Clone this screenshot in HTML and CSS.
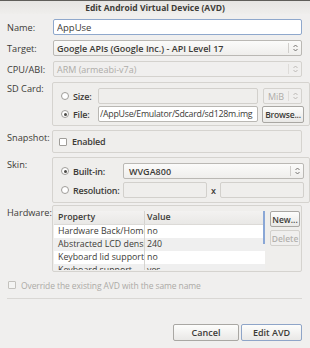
FILE: index.html
```html
<!DOCTYPE html>
<html lang="en">
<head>
    <meta charset="UTF-8">
    <title>Edit Android Virtual Device (AVD)</title>
    <link rel="stylesheet" href="styles.css">
</head>
<body>
    <div class="dialog">
        <!-- Title bar -->
        <div class="titlebar">Edit Android Virtual Device (AVD)</div>

        <div class="form">
            <div class="row row-name">
                <label class="lbl">Name:</label>
                <div class="field"><input class="text focus" type="text" value="AppUse"></div>
            </div>

            <div class="row row-target">
                <label class="lbl">Target:</label>
                <div class="field">
                    <div class="combo">
                        <span class="combo-text">Google APIs (Google Inc.) - API Level 17</span>
                        <span class="combo-arrow"><svg width="5" height="8" viewBox="0 0 5 8"><path d="M0.5 3 L2.5 1 L4.5 3 M0.5 5 L2.5 7 L4.5 5" fill="none" stroke="#6a6864" stroke-width="0.9"/></svg></span>
                    </div>
                </div>
            </div>

            <div class="row row-cpu">
                <label class="lbl">CPU/ABI:</label>
                <div class="field">
                    <div class="combo disabled">
                        <span class="combo-text">ARM (armeabi-v7a)</span>
                        <span class="combo-arrow"><svg width="5" height="8" viewBox="0 0 5 8"><path d="M0.5 3 L2.5 1 L4.5 3 M0.5 5 L2.5 7 L4.5 5" fill="none" stroke="#b5b3af" stroke-width="0.9"/></svg></span>
                    </div>
                </div>
            </div>

            <!-- SD card -->
            <div class="row row-group row-sd">
                <label class="lbl grp-lbl">SD Card:</label>
                <div class="group sd-group">
                    <div class="grp-line">
                        <span class="radio"></span>
                        <span class="opt sd-opt">Size:</span>
                        <input class="text disabled sd-input" type="text" value="">
                        <div class="combo disabled mib">
                            <span class="combo-text">MiB</span>
                            <span class="combo-arrow"><svg width="5" height="8" viewBox="0 0 5 8"><path d="M0.5 3 L2.5 1 L4.5 3 M0.5 5 L2.5 7 L4.5 5" fill="none" stroke="#b5b3af" stroke-width="0.9"/></svg></span>
                        </div>
                    </div>
                    <div class="grp-line">
                        <span class="radio checked"></span>
                        <span class="opt sd-opt">File:</span>
                        <input class="text sd-input path" type="text" value="/AppUse/Emulator/Sdcard/sd128m.img">
                        <button class="btn browse">Browse...</button>
                    </div>
                </div>
            </div>

            <!-- Snapshot -->
            <div class="row row-group row-snap">
                <label class="lbl grp-lbl">Snapshot:</label>
                <div class="group snap-group">
                    <span class="check"></span>
                    <span class="opt">Enabled</span>
                </div>
            </div>

            <!-- Skin -->
            <div class="row row-group row-skin">
                <label class="lbl grp-lbl">Skin:</label>
                <div class="group skin-group">
                    <div class="grp-line">
                        <span class="radio checked"></span>
                        <span class="opt skin-opt">Built-in:</span>
                        <div class="combo skin-combo">
                            <span class="combo-text">WVGA800</span>
                            <span class="combo-arrow"><svg width="5" height="8" viewBox="0 0 5 8"><path d="M0.5 3 L2.5 1 L4.5 3 M0.5 5 L2.5 7 L4.5 5" fill="none" stroke="#6a6864" stroke-width="0.9"/></svg></span>
                        </div>
                    </div>
                    <div class="grp-line">
                        <span class="radio"></span>
                        <span class="opt skin-opt">Resolution:</span>
                        <input class="text disabled res-input" type="text" value="">
                        <span class="res-x">x</span>
                        <input class="text disabled res-input res-last" type="text" value="">
                    </div>
                </div>
            </div>

            <!-- Hardware -->
            <div class="row row-group row-hw">
                <label class="lbl grp-lbl">Hardware:</label>
                <div class="group hw-group">
                    <div class="hw-table">
                        <div class="hw-head">
                            <span class="col-prop">Property</span>
                            <span class="col-val">Value</span>
                        </div>
                        <div class="hw-row">
                            <span class="col-prop">Hardware Back/Home</span>
                            <span class="col-val">no</span>
                        </div>
                        <div class="hw-row alt">
                            <span class="col-prop">Abstracted LCD densi</span>
                            <span class="col-val">240</span>
                        </div>
                        <div class="hw-row">
                            <span class="col-prop">Keyboard lid support</span>
                            <span class="col-val">no</span>
                        </div>
                        <div class="hw-row alt">
                            <span class="col-prop">Keyboard support</span>
                            <span class="col-val">yes</span>
                        </div>
                        <span class="scroll-thumb"></span>
                    </div>
                    <div class="hw-buttons">
                        <button class="btn small">New...</button>
                        <button class="btn small disabled">Delete</button>
                    </div>
                </div>
            </div>

            <div class="override">
                <span class="check faded"></span>
                <span>Override the existing AVD with the same name</span>
            </div>

            <div class="separator"></div>

            <div class="actions">
                <button class="btn action">Cancel</button>
                <button class="btn action default">Edit AVD</button>
            </div>
        </div>
    </div>
</body>
</html>
```

FILE: styles.css
```css
body {
    margin: 0;
    padding: 0;
    background-color: #f0efee;
    font-family: "Open Sans", "Noto Sans", sans-serif;
    font-size: 9px;
    color: #3c3b37;
}
.dialog {
    width: 310px;
    height: 348px;
    background-color: #f0efee;
    overflow: hidden;
}
.titlebar {
    height: 13px;
    line-height: 13px;
    border-top: 1px solid #5f5e5a;
    background: linear-gradient(#e6e5e3, #efeeec);
    text-align: center;
    font-weight: bold;
    font-size: 8.5px;
    color: #3c3b37;
}
.form {
    padding: 5px 8px 0 7px;
}
.row {
    display: flex;
    align-items: center;
}
.lbl {
    width: 45px;
    flex: none;
    font-size: 9.2px;
}
.grp-lbl {
    align-self: flex-start;
    padding-top: 1px;
}
.field {
    flex: 1;
    padding-left: 1px;
}
.row-name {
    height: 16px;
}
.row-target {
    height: 16px;
    margin-top: 5px;
}
.row-cpu {
    height: 16px;
    margin-top: 5px;
}
.text {
    box-sizing: border-box;
    width: 100%;
    height: 16px;
    margin: 0;
    padding: 0 3px;
    border: 1px solid #b9b7b3;
    border-radius: 2px;
    background-color: #ffffff;
    font-family: inherit;
    font-size: 9.5px;
    color: #3c3b37;
    outline: none;
}
.text.focus {
    border-color: #8fa8cc;
}
.text.disabled {
    background-color: #efeeec;
    border-color: #d2d0cc;
}
.text.path {
    font-size: 8.8px;
    padding: 0 1px;
    letter-spacing: -0.25px;
}
.combo {
    box-sizing: border-box;
    height: 16px;
    display: flex;
    align-items: center;
    border: 1px solid #bab8b4;
    border-radius: 2px;
    background: linear-gradient(#fbfbfa, #efeeec);
    font-weight: 600;
}
.combo-text {
    flex: 1;
    padding-left: 3px;
    white-space: nowrap;
    overflow: hidden;
}
.combo-arrow {
    flex: none;
    width: 12px;
    height: 10px;
    border-left: 1px solid #d0cecb;
    display: flex;
    align-items: center;
    justify-content: center;
}
.combo.disabled {
    color: #aeaca8;
    border-color: #d4d2ce;
    background: #f0efee;
    font-weight: normal;
}
.combo.disabled .combo-arrow {
    border-left-color: #dedcd9;
}

/* group boxes */
.row-group {
    align-items: flex-start;
}
.row-sd {
    margin-top: 5px;
}
.row-sd .grp-lbl {
    padding-top: 0;
}
.row-snap,
.row-skin {
    margin-top: 4px;
}
.row-hw {
    margin-top: 2px;
}
.group {
    box-sizing: border-box;
    flex: 1;
    border: 1px solid #d5d3cf;
    border-radius: 2px;
    background-color: #efeeec;
}
.sd-group {
    height: 44px;
    padding: 5px 5px 0 5px;
    display: flex;
    flex-direction: column;
    gap: 2px;
}
.grp-line {
    display: flex;
    align-items: center;
    height: 16px;
}
.radio {
    box-sizing: border-box;
    flex: none;
    width: 8px;
    height: 8px;
    border: 1px solid #9f9d99;
    border-radius: 50%;
    background-color: #ffffff;
    margin: 0 4px 0 3px;
    position: relative;
}
.radio.checked::after {
    content: "";
    position: absolute;
    left: 1.5px;
    top: 1.5px;
    width: 3px;
    height: 3px;
    border-radius: 50%;
    background-color: #4c4b47;
}
.check {
    box-sizing: border-box;
    flex: none;
    width: 8px;
    height: 8px;
    border: 1px solid #9f9d99;
    border-radius: 1px;
    background-color: #ffffff;
}
.opt {
    font-weight: 600;
    letter-spacing: -0.2px;
    white-space: nowrap;
}
.sd-opt {
    width: 25px;
    flex: none;
}
.sd-input {
    width: 160px;
    flex: none;
}
.mib {
    width: 39px;
    margin-left: 5px;
}
.mib .combo-text {
    padding-left: 4px;
}
.btn {
    box-sizing: border-box;
    margin: 0;
    padding: 0;
    border: 1px solid #a9a7a3;
    border-radius: 2px;
    background: linear-gradient(#fdfdfc, #e9e8e6);
    font-family: inherit;
    font-size: 9px;
    font-weight: 600;
    color: #3c3b37;
}
.browse {
    height: 17px;
    width: 42px;
    margin-left: 4px;
    font-size: 8.5px;
    letter-spacing: -0.2px;
}
.snap-group {
    height: 23px;
    display: flex;
    align-items: center;
    gap: 5px;
    padding-left: 6px;
}
.skin-group {
    height: 46px;
    padding: 5px 5px 0 5px;
    display: flex;
    flex-direction: column;
    gap: 3px;
}
.skin-opt {
    width: 50px;
    flex: none;
}
.skin-combo {
    flex: 1;
}
.skin-combo .combo-text {
    padding-left: 5px;
}
.res-input {
    width: 84px;
    flex: none;
}
.res-x {
    width: 13px;
    text-align: center;
    font-weight: 600;
}
.res-input.res-last {
    flex: 1;
}

/* hardware table */
.hw-group {
    height: 67px;
    padding: 5px 5px 0 1px;
    display: flex;
    gap: 5px;
    overflow: hidden;
}
.hw-table {
    position: relative;
    width: 211px;
    height: 59px;
    flex: none;
    background-color: #ffffff;
    overflow: hidden;
    font-size: 8.8px;
}
.hw-head,
.hw-row {
    display: flex;
    height: 13px;
    line-height: 13px;
}
.hw-head {
    background: linear-gradient(#f3f2f1, #e9e8e6);
    border-bottom: 1px solid #dcdad7;
    font-weight: 600;
}
.hw-row.alt {
    background-color: #efefef;
}
.col-prop {
    width: 86px;
    flex: none;
    padding-left: 4px;
    white-space: nowrap;
    overflow: hidden;
    border-right: 1px solid #d6d4d0;
}
.col-val {
    flex: 1;
    padding-left: 2px;
    white-space: nowrap;
}
.scroll-thumb {
    position: absolute;
    right: 0;
    top: 0;
    width: 2px;
    height: 33px;
    background-color: #8aa7d6;
}
.hw-buttons {
    display: flex;
    flex-direction: column;
    gap: 3px;
}
.btn.small {
    width: 30px;
    height: 16px;
    font-size: 8.5px;
}
.btn.disabled {
    color: #b4b2ae;
    border-color: #d3d1cd;
    background: #f0efee;
}

.override {
    display: flex;
    align-items: center;
    gap: 5px;
    height: 12px;
    margin-top: 7px;
    padding-left: 1px;
    font-size: 8.5px;
    letter-spacing: -0.1px;
    color: #acaaa6;
}
.check.faded {
    border-color: #c3c1bd;
    background-color: #f4f4f3;
}
.separator {
    height: 1px;
    margin-top: 7px;
    background-color: #d9d7d4;
}
.actions {
    display: flex;
    justify-content: flex-end;
    gap: 2px;
    margin-top: 25px;
}
.btn.action {
    height: 17px;
}
.actions .btn:first-child {
    width: 66px;
}
.btn.default {
    width: 61px;
    border-color: #8fa5c8;
}
```
